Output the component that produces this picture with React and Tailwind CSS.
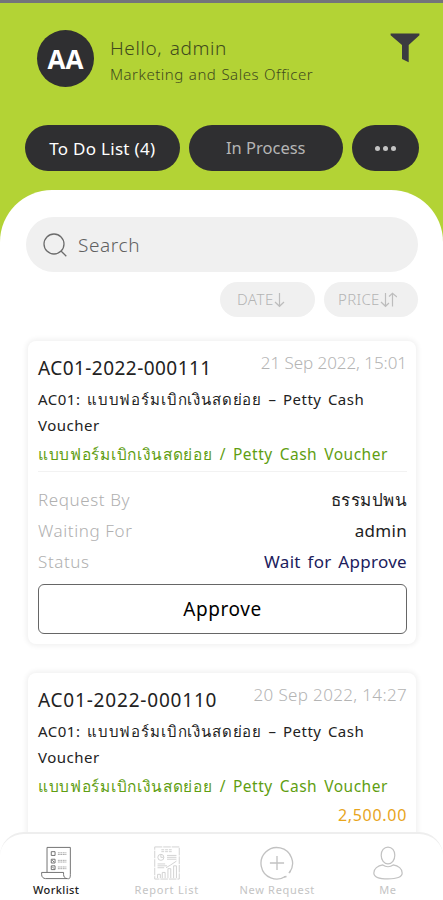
import { clsx } from 'clsx';

const TABS = [
  { label: 'To Do List (4)', className: 'text-[17px] text-white tracking-[0.3px]' },
  { label: 'In Process', className: 'text-[16.5px] text-[#b5b5b5] tracking-[0px]' },
];

const REQUESTS = [
  {
    id: 'AC01-2022-000111',
    date: '21 Sep 2022, 15:01',
    idClass: 'tracking-[0.45px]',
    dateClass: 'tracking-[-0.05px]',
    requestBy: 'ธรรมปพน',
    waitingFor: 'admin',
    status: 'Wait for Approve',
  },
  {
    id: 'AC01-2022-000110',
    date: '20 Sep 2022, 14:27',
    idClass: 'tracking-[0.8px]',
    dateClass: 'tracking-[0.35px]',
    amount: '2,500.00',
  },
];

function FilterIcon() {
  return (
    <svg className="h-[30px] w-[30px]" viewBox="0 0 30 30" fill="#3b3b40">
      <path d="M.6.5h28.8v1.7L18.7 12v17.2L12 26V12L.6 2.2z" />
    </svg>
  );
}

function SearchIcon() {
  return (
    <svg className="h-6 w-6" viewBox="0 0 24 24" fill="none" stroke="#6c6c6c" strokeWidth="1.3">
      <circle cx="11" cy="11" r="10" />
      <path d="m18 18 5.3 5.2" />
    </svg>
  );
}

function ArrowDown() {
  return (
    <svg className="h-4 w-[11px]" viewBox="0 0 11 16" fill="none" stroke="#bdbdbd" strokeWidth="1.2">
      <path d="M5.5 1v13M1 10l4.5 4.3L10 10" />
    </svg>
  );
}

function ArrowsUpDown() {
  return (
    <svg className="h-4 w-[17px]" viewBox="0 0 17 16" fill="none" stroke="#bdbdbd" strokeWidth="1.2">
      <path d="M5.5 1v13M1 10l4.5 4.3L9 11M12.500 14.500v-13M9 4.500l3.500-3.300L17 5" />
    </svg>
  );
}

function WorklistIcon() {
  return (
    <svg className="h-9 w-8" viewBox="0 0 32 36" fill="none" stroke="#6c6c6c" strokeWidth="1">
      <path d="M6.500 28V1.500h24.700V30c0 6-2 4.500-3.400 4.500h-23c-2.200 0-4-1.800-4-4V28H24v2c0 2.500 1.500 4.500 3.800 4.500" />
      <path d="M11 6h4v4h-4zM11 14h4v4h-4zM11 21h4v4h-4zM12 15l2 2m-2 5 2 2" />
      <path d="M18 7.200h9M18 9h9M18 15.200h9M18 17h9M18 22.200h9M18 24h9" strokeDasharray="2 .6" strokeWidth=".6" />
    </svg>
  );
}

function ReportIcon() {
  return (
    <svg className="h-9 w-7" viewBox="0 0 28 36" fill="none" stroke="#d0d0d0" strokeWidth="1">
      <path d="M1 1h26v34H1z" strokeDasharray="8 1" />
      <path d="M8 4h12M8 6h12" strokeDasharray="3 1" />
      <circle cx="7.5" cy="12" r="3.2" />
      <path d="M7.5 9v3h3M14 10h10M14 12h10M14 14h10M4 19h8M4 21h10M4 23h7" />
      <path d="M4 34v-4h3v4m2 0v-6h3v6m3 0V24h3v10m3 0V21h3v13M13 23l5-3 6-4" />
    </svg>
  );
}

function NewRequestIcon() {
  return (
    <svg className="h-9 w-9" viewBox="0 0 36 36" fill="none" stroke="#c2c2c2" strokeWidth="1.4">
      <path d="M27.200 32.100A16.700 16.700 0 1 1 31.300 28.100M18 10.500v15M10.500 18h15" />
      <path d="m25.500 32.800 2.600-.5M30.600 28.800l1.800-2.600" />
    </svg>
  );
}

function MeIcon() {
  return (
    <svg className="h-9 w-8" viewBox="0 0 32 36" fill="none" stroke="#c2c2c2" strokeWidth="1.3">
      <path d="M16 1.200c-4.300 0-7.200 3.600-7.200 8.500 0 5.200 3 9.300 7.200 9.300s7.200-4.100 7.200-9.300c0-4.900-2.900-8.500-7.200-8.500z" />
      <path d="M10.500 20C5 20.800 1 24.200 1 28.500c0 4.500 6 6.300 15 6.300s15-1.800 15-6.300c0-4.300-4-7.700-9.500-8.500-3.200 2.400-7.800 2.400-11 0z" />
    </svg>
  );
}

const NAV = [
  { label: 'Worklist', icon: WorklistIcon, className: 'text-[#222] font-medium tracking-[0.4px]' },
  { label: 'Report List', icon: ReportIcon, className: 'text-[#c4c4c4] tracking-[0.8px]' },
  { label: 'New Request', icon: NewRequestIcon, className: 'text-[#c4c4c4] tracking-[0.7px]' },
  { label: 'Me', icon: MeIcon, className: 'text-[#c4c4c4] tracking-[0.4px]' },
];

function DetailRow({ label, value, className }) {
  return (
    <div className="flex h-[31px] items-center justify-between whitespace-nowrap text-[17px]">
      <span className="font-light tracking-[0.6px] text-[#b0b0b0]">{label}</span>
      <span className={className}>{value}</span>
    </div>
  );
}

function RequestCard({ request }) {
  return (
    <article className="h-[303px] shrink-0 rounded-lg bg-white pt-[7px] pr-[9px] pl-[10px] shadow-[0_0_5px_2px_rgba(0,0,0,0.06)]">
      <div className="flex h-[38px] justify-between whitespace-nowrap">
        <h2 className={clsx('pt-[5px] text-[19px] leading-[30px] text-[#222]', request.idClass)}>{request.id}</h2>
        <time className={clsx('text-[17px] leading-[30px] font-light text-[#b4b4b4]', request.dateClass)}>{request.date}</time>
      </div>
      <p className="text-[15px] leading-[26px] tracking-[0.5px] text-[#222] [word-spacing:2px]">
        AC01: <span className="tracking-[0.85px]">แบบฟอร์มเบิกเงินสดย่อย</span> – Petty Cash
        <br />
        Voucher
      </p>
      <p className="mt-[2px] text-[15.5px] leading-[29px] tracking-[0.5px] whitespace-nowrap text-[#5f9e12] [word-spacing:2.5px]">
        <span className="tracking-[0.7px]">แบบฟอร์มเบิกเงินสดย่อย</span> / Petty Cash Voucher
      </p>
      {request.amount ? (
        <div className="text-right text-[16px] leading-[29px] tracking-[0.7px] text-[#e8a51c]">{request.amount}</div>
      ) : (
        <>
          <div className="mt-[2px] mb-[12px] border-t border-[#f2f2f2]" />
          <DetailRow label="Request By" value={request.requestBy} className="tracking-[0.5px] text-[#222]" />
          <DetailRow label="Waiting For" value={request.waitingFor} className="tracking-[0.3px] text-[#222]" />
          <DetailRow label="Status" value={request.status} className="tracking-[0.3px] text-[#20205c] [word-spacing:2px]" />
          <button className="mt-[7px] h-[50px] w-full rounded-md border border-[#666] text-[19px] tracking-[0.6px] text-black">
            Approve
          </button>
        </>
      )}
    </article>
  );
}

export default function App() {
  return (
    <div className="flex h-[900px] w-[443px] flex-col overflow-hidden border-t-[3px] border-[#74747a] bg-[#b3d335] font-['Noto_Sans',sans-serif]">
      <header className="h-[187px] shrink-0">
        <div className="flex h-[122px] pt-[27px] pr-[23px] pl-[37px]">
          <div className="flex size-[57px] items-center justify-center rounded-full bg-[#2f2f31] pt-px font-['Open_Sans'] text-[26px] font-bold text-white">
            AA
          </div>
          <div className="ml-4 flex-1 whitespace-nowrap text-[#3f4a1d]">
            <div className="mt-[4px] text-[19px] leading-7 font-light tracking-[0.6px] [word-spacing:2px]">Hello, admin</div>
            <div className="text-[15px] leading-6 font-light tracking-[0.5px] [word-spacing:0.7px]">Marketing and Sales Officer</div>
          </div>
          <div className="pt-[3px]"><FilterIcon /></div>
        </div>
        <div className="flex h-[46px] gap-[9px] pl-[25px]">
          {TABS.map((tab) => (
            <button key={tab.label} className={clsx('w-[154.5px] rounded-full bg-[#2f2f31] pt-px', tab.className)}>
              {tab.label}
            </button>
          ))}
          <button className="flex w-[67px] items-center justify-center gap-[3px] rounded-full bg-[#2f2f31]">
            <span className="size-[5px] rounded-full bg-[#c4c4c4]" />
            <span className="size-[5px] rounded-full bg-[#c4c4c4]" />
            <span className="size-[5px] rounded-full bg-[#c4c4c4]" />
          </button>
        </div>
      </header>

      <main className="flex min-h-0 flex-1 flex-col overflow-hidden rounded-t-[52px] bg-white pt-[27px] pr-[25px] pl-[26px]">
        <div className="flex h-[55px] shrink-0 items-center rounded-full bg-[#f0f0f0] pl-[17px]">
          <SearchIcon />
          <span className="mt-[2px] ml-[11px] text-[19px] font-light tracking-[0.6px] text-[#606060]">Search</span>
        </div>
        <div className="mt-[10px] flex h-[35px] shrink-0 justify-end gap-[9px] text-[15px] font-light text-[#b4b4b4]">
          <button className="flex w-[95px] items-center rounded-full bg-[#f0f0f0] pl-[17px] tracking-[0.5px]">DATE<ArrowDown /></button>
          <button className="flex w-[94px] items-center rounded-full bg-[#f0f0f0] pl-[14px] tracking-[0.3px]">PRICE<ArrowsUpDown /></button>
        </div>
        <div className="mt-6 flex flex-col gap-[29px] px-[2px]">
          {REQUESTS.map((request) => (
            <RequestCard key={request.id} request={request} />
          ))}
        </div>
      </main>

      <nav className="z-10 -mt-[24px] flex h-[68px] shrink-0 rounded-t-[24px] border-t-2 border-[#eee] bg-white pl-px">
        {NAV.map(({ label, icon: Icon, className }) => (
          <a key={label} className={clsx('flex flex-1 flex-col items-center pt-[12px] text-[11px] leading-[20px]', className)}>
            <Icon />
            {label}
          </a>
        ))}
      </nav>
    </div>
  );
}
